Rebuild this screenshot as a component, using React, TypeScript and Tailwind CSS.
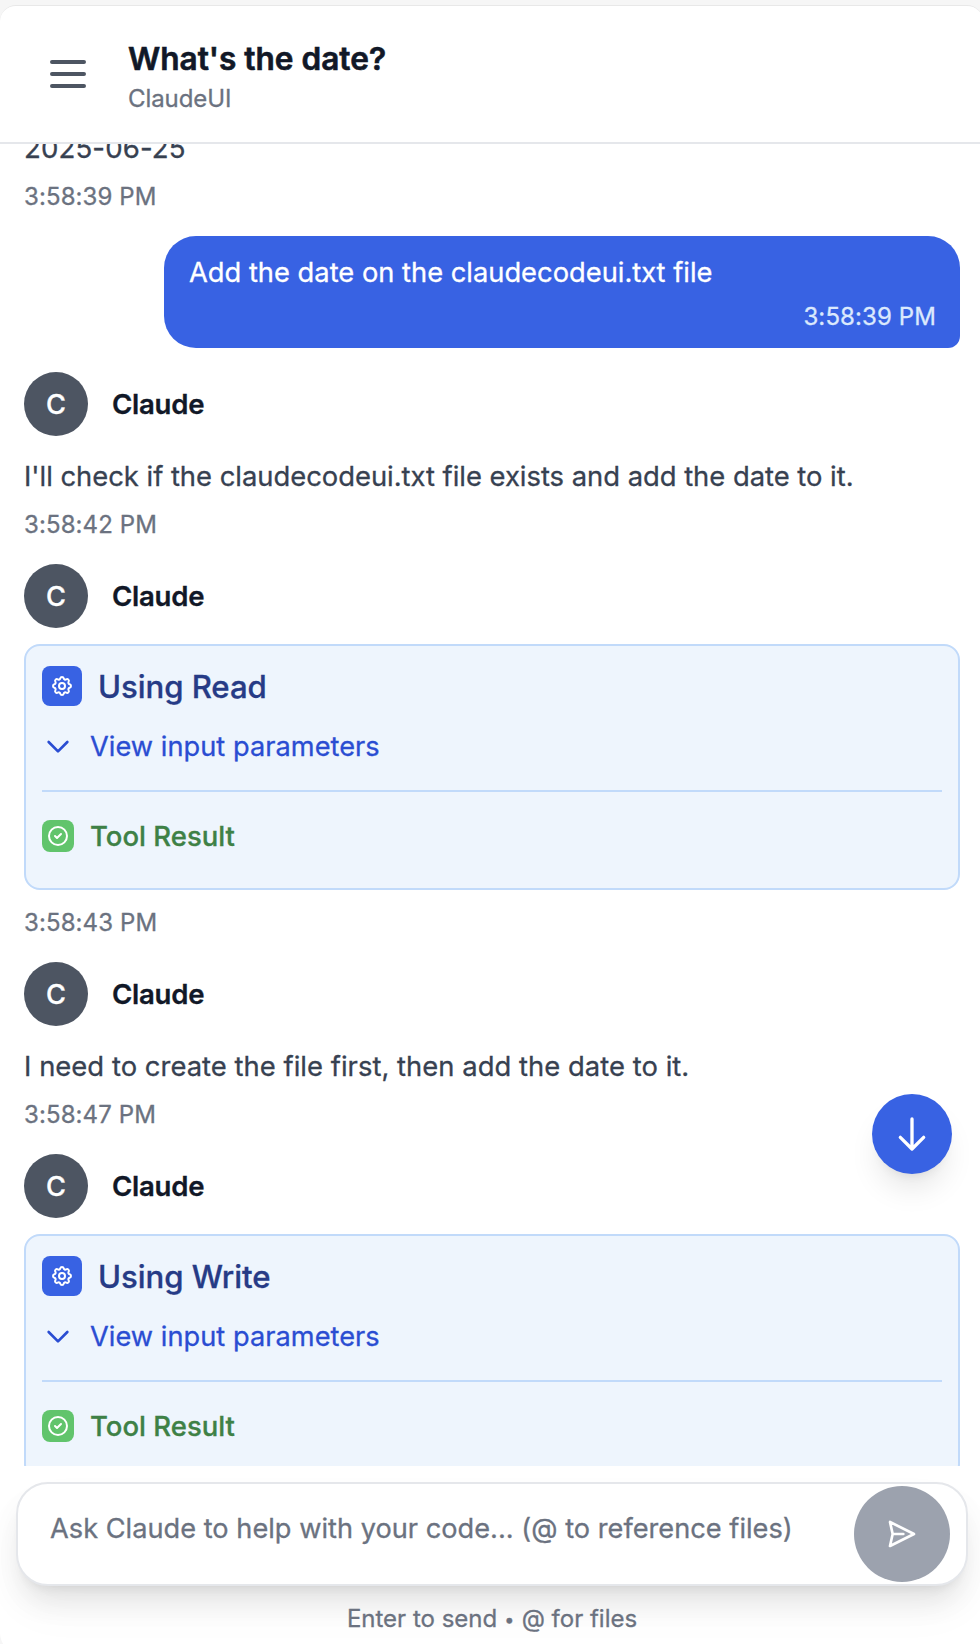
import type { ReactNode } from "react";

type StrokeIconProps = { d: string[]; className: string; width?: number };

function StrokeIcon({ d, className, width = 2 }: StrokeIconProps) {
  return (
    <svg
      className={className}
      viewBox="0 0 24 24"
      fill="none"
      stroke="currentColor"
      strokeWidth={width}
      strokeLinecap="round"
      strokeLinejoin="round"
    >
      {d.map((path) => (
        <path key={path} d={path} />
      ))}
    </svg>
  );
}

const icons = {
  menu: ["M4 6h16M4 12h16M4 18h16"],
  cog: [
    "M10.325 4.317c.426-1.756 2.924-1.756 3.35 0a1.724 1.724 0 002.573 1.066c1.543-.94 3.31.826 2.37 2.37a1.724 1.724 0 001.065 2.572c1.756.426 1.756 2.924 0 3.35a1.724 1.724 0 00-1.066 2.573c.94 1.543-.826 3.31-2.37 2.37a1.724 1.724 0 00-2.572 1.065c-.426 1.756-2.924 1.756-3.35 0a1.724 1.724 0 00-2.573-1.066c-1.543.94-3.31-.826-2.37-2.37a1.724 1.724 0 00-1.065-2.572c-1.756-.426-1.756-2.924 0-3.35a1.724 1.724 0 001.066-2.573c-.94-1.543.826-3.31 2.37-2.37.996.608 2.296.07 2.572-1.065z",
    "M15 12a3 3 0 11-6 0 3 3 0 016 0z",
  ],
  chevron: ["M19 9l-7 7-7-7"],
  check: ["M9 12l2 2 4-4m6 2a9 9 0 11-18 0 9 9 0 0118 0z"],
  down: ["M19 14l-7 7m0 0l-7-7m7 7V3"],
  send: ["M12 19l9 2-9-18-9 18 9-2zm0 0v-8"],
};

function Time({ children, className = "" }: { children: string; className?: string }) {
  return (
    <div className={`-mb-px pt-px text-[24px] leading-8 tracking-[0.1px] ${className}`}>
      {children}
    </div>
  );
}

function AssistantMessage({ time, children }: { time?: string; children: ReactNode }) {
  return (
    <article className="flex flex-col">
      <div className="flex items-center gap-6">
        <div className="flex size-16 items-center justify-center rounded-full bg-[#4d5562] pt-px text-[27.2px] leading-10 font-medium text-white">
          C
        </div>
        <div className="text-[27.6px] leading-10 font-semibold tracking-[-0.26px] text-[#111827]">
          Claude
        </div>
      </div>
      {children}
      {time && <Time className="text-[#6b7280]">{time}</Time>}
    </article>
  );
}

function ToolCard({ name }: { name: string }) {
  return (
    <div className="mt-4 mb-4 flex h-[246px] flex-col rounded-2xl border-2 border-[#c1dafa] bg-[#eef5fd] px-4 pt-5">
      <div className="flex items-center gap-4">
        <div className="flex size-10 items-center justify-center rounded-lg bg-[#3862e3] text-white">
          <StrokeIcon d={icons.cog} className="size-6" />
        </div>
        <div className="-mb-px pt-px text-[31.2px] leading-10 font-medium tracking-[-0.08px] text-[#263b86]">
          Using {name}
        </div>
      </div>
      <div className="mt-5 flex items-center gap-4 text-[#2a4dd2]">
        <StrokeIcon d={icons.chevron} className="size-8" />
        <div className="-mb-px pt-px text-[27.2px] leading-10 tracking-[0.04px]">View input parameters</div>
      </div>
      <div className="mt-6 flex items-center gap-4 border-t-2 border-[#c1dafa] pt-6">
        <div className="flex size-8 items-center justify-center rounded-lg bg-[#61c46c] text-white">
          <StrokeIcon d={icons.check} className="size-6" />
        </div>
        <div className="text-[27.5px] leading-10 font-medium text-[#3e8146]">Tool Result</div>
      </div>
    </div>
  );
}

export default function App() {
  return (
    <div className="h-[1644px] w-[980px] overflow-hidden bg-[#f6f6f6] pt-[5px] font-['Inter',sans-serif] [-webkit-text-stroke:0.3px]">
      <div className="h-[1648px] w-[983px] overflow-hidden rounded-t-2xl rounded-b-[20px] border-t border-[#e8e8e8] bg-white">
        <div className="relative flex h-[1638px] w-[980px] flex-col">
          <header className="flex h-[138px] shrink-0 items-start border-b-2 border-[#e5e7eb] pt-[33px] pl-11">
            <button className="mt-[11px] text-[#4d5562]" aria-label="Menu">
              <StrokeIcon d={icons.menu} className="size-12" />
            </button>
            <div className="ml-9">
              <h1 className="text-[31.6px] leading-10 font-semibold text-[#111827] [-webkit-text-stroke:0.6px]">
                What's the date?
              </h1>
              <div className="mt-1 text-[24px] leading-8 tracking-[-0.08px] text-[#6b7280]">
                ClaudeUI
              </div>
            </div>
          </header>

          <main className="flex h-[1322px] shrink-0 flex-col gap-6 overflow-hidden pr-5 pl-6">
            <div className="-mt-[17px] shrink-0">
              <p className="-mb-px pt-px text-[27.6px] leading-10 tracking-[0.12px] text-[#374151]">
                2025-06-25
              </p>
              <Time className="mt-[13px] text-[#6b7280]">3:58:39 PM</Time>
            </div>

            <div className="ml-[140px] shrink-0 rounded-[32px] rounded-br-xl bg-[#3862e3] px-6 pt-4 pb-4">
              <p className="-mb-px pt-px pl-px text-[27.3px] leading-10 text-white">
                Add the date on the claudecodeui.txt file
              </p>
              <Time className="mt-2 text-right text-[#dbe9fd]">3:58:39 PM</Time>
            </div>

            <AssistantMessage time="3:58:42 PM">
              <p className="mt-5 mb-3 text-[27.4px] leading-10 tracking-[-0.02px] text-[#374151]">
                I'll check if the claudecodeui.txt file exists and add the date to it.
              </p>
            </AssistantMessage>

            <AssistantMessage time="3:58:43 PM">
              <ToolCard name="Read" />
            </AssistantMessage>

            <AssistantMessage time="3:58:47 PM">
              <p className="mt-5 mb-3 text-[27.4px] leading-10 tracking-[0.035px] text-[#374151]">
                I need to create the file first, then add the date to it.
              </p>
            </AssistantMessage>

            <AssistantMessage>
              <ToolCard name="Write" />
            </AssistantMessage>
          </main>

          <footer className="px-4 pt-4 pr-3">
            <div className="flex h-[104px] items-center justify-between rounded-[32px] border-2 border-[#e5e7eb] bg-white pr-4 pl-8 shadow-[0_20px_30px_-6px_rgba(0,0,0,0.1),0_8px_12px_-8px_rgba(0,0,0,0.1),0_24px_50px_0_rgba(0,0,0,0.03)]">
              <div className="-mt-2.5 text-[27.2px] leading-10 tracking-[0.01px] text-[#6b7280]">
                Ask Claude to help with your code... (@ to reference files)
              </div>
              <button
                className="flex size-24 items-center justify-center rounded-full bg-[#9ca2ae] text-white"
                aria-label="Send"
              >
                <StrokeIcon d={icons.send} className="size-8 rotate-90" />
              </button>
            </div>
            <div className="mt-[17px] text-center text-[24px] leading-8 text-[#6b7280]">
              Enter to send{" "}
              <span className="inline-block w-[11px] text-center align-[1px] text-[18px] leading-none">•</span>{" "}
              @ for files
            </div>
          </footer>

          <button
            className="absolute top-[1088px] right-7 flex size-20 items-center justify-center rounded-full bg-[#3862e3] text-white shadow-[0_20px_30px_-6px_rgba(0,0,0,0.1),0_8px_12px_-8px_rgba(0,0,0,0.1)]"
            aria-label="Scroll to bottom"
          >
            <StrokeIcon d={icons.down} className="size-10" />
          </button>
        </div>
      </div>
    </div>
  );
}
